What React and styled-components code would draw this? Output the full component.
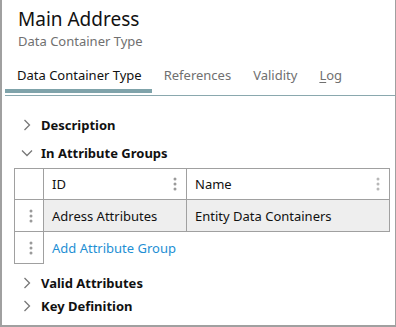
import React from 'react';
import styled, { createGlobalStyle } from 'styled-components';

const Global = createGlobalStyle`
  html, body { margin: 0; padding: 0; background: #fff; }
  body { font-family: "Noto Sans", "DejaVu Sans", sans-serif; }
`;

const Frame = styled.div`
  box-sizing: border-box;
  width: 396px;
  height: 327px;
  border-left: 2px solid #a0a0a0;
  border-right: 1px solid #a0a0a0;
  border-bottom: 2px solid #a0a0a0;
  display: flex;
  flex-direction: column;
  overflow: hidden;
`;

const Header = styled.div`
  padding: 6px 0 0 16px;
`;

const Title = styled.div`
  font-size: 19px;
  line-height: 26px;
  color: #111;
`;

const Subtitle = styled.div`
  font-size: 13px;
  line-height: 18px;
  color: #707070;
`;

const Tabs = styled.div`
  display: flex;
  margin: 12px 0 0 3px;
  border-bottom: 1px solid #8aa8ae;
`;

const Tab = styled.div`
  padding: 0 10px 0 12px;
  font-size: 13px;
  line-height: 26px;
  padding-bottom: 1px;
  color: ${p => (p.active ? '#111' : '#707070')};
  border-bottom: 4px solid ${p => (p.active ? '#7fa3aa' : 'transparent')};
  margin-bottom: 2px;
  u { text-decoration-thickness: 1px; text-underline-offset: 2px; }
`;

const Body = styled.div`
  padding: 15px 0 0 12px;
`;

const Section = styled.div`
  display: flex;
  align-items: center;
  height: ${p => p.h || 28}px;
  gap: 5px;
  font-size: 13px;
  font-weight: bold;
  color: #111;
`;

const Chevron = styled.svg`
  width: 18px;
  height: 18px;
  margin-left: 4px;
`;

const Table = styled.div`
  margin: 1px 5px 7px 0;
  display: grid;
  grid-template-columns: 30px 143px 1fr;
  font-size: 13px;
  color: #111;
`;

const Cell = styled.div`
  box-sizing: border-box;
  height: 32px;
  display: flex;
  align-items: center;
  justify-content: ${p => (p.center ? 'center' : 'space-between')};
  padding: ${p => (p.center ? '0 0 0 4px' : '0 9px 0 8px')};
  background: ${p => (p.shade ? '#eeeeee' : '#fff')};
  border-right: ${p => (p.noBorder ? '0' : '1px solid #a0a0a0')};
  border-bottom: ${p => (p.noBorder ? '0' : '1px solid #a0a0a0')};
  border-left: ${p => (p.first ? '1px solid #a0a0a0' : '0')};
  border-top: ${p => (p.top ? '1px solid #a0a0a0' : '0')};
`;

const Link = styled.span`
  color: #1e8fd4;
`;

const Dots = ({ color = '#9a9a9a' }) => (
  <svg width="4" height="14" viewBox="0 0 4 14">
    <circle cx="2" cy="2" r="1.5" fill={color} />
    <circle cx="2" cy="7" r="1.5" fill={color} />
    <circle cx="2" cy="12" r="1.5" fill={color} />
  </svg>
);

const Right = () => (
  <Chevron viewBox="0 0 18 18">
    <path d="M6.5 4 L11.5 9 L6.5 14" fill="none" stroke="#777" strokeWidth="1.3" />
  </Chevron>
);

const Down = () => (
  <Chevron viewBox="0 0 18 18">
    <path d="M4 6.5 L9 11.5 L14 6.5" fill="none" stroke="#777" strokeWidth="1.3" />
  </Chevron>
);

export default function App() {
  return (
    <Frame>
      <Global />
      <Header>
        <Title>Main Address</Title>
        <Subtitle>Data Container Type</Subtitle>
      </Header>
      <Tabs>
        <Tab active>Data Container Type</Tab>
        <Tab>References</Tab>
        <Tab>Validity</Tab>
        <Tab><u>L</u>og</Tab>
      </Tabs>
      <Body>
        <Section><Right />Description</Section>
        <Section><Down />In Attribute Groups</Section>
        <Table>
          <Cell first top />
          <Cell top>ID<Dots /></Cell>
          <Cell top>Name<Dots color="#b8b8b8" /></Cell>
          <Cell first center><Dots /></Cell>
          <Cell shade>Adress Attributes</Cell>
          <Cell shade>Entity Data Containers</Cell>
          <Cell first center><Dots /></Cell>
          <Cell noBorder style={{ gridColumn: 'span 2' }}><Link>Add Attribute Group</Link></Cell>
        </Table>
        <Section h={23}><Right />Valid Attributes</Section>
        <Section h={23}><Right />Key Definition</Section>
      </Body>
    </Frame>
  );
}
